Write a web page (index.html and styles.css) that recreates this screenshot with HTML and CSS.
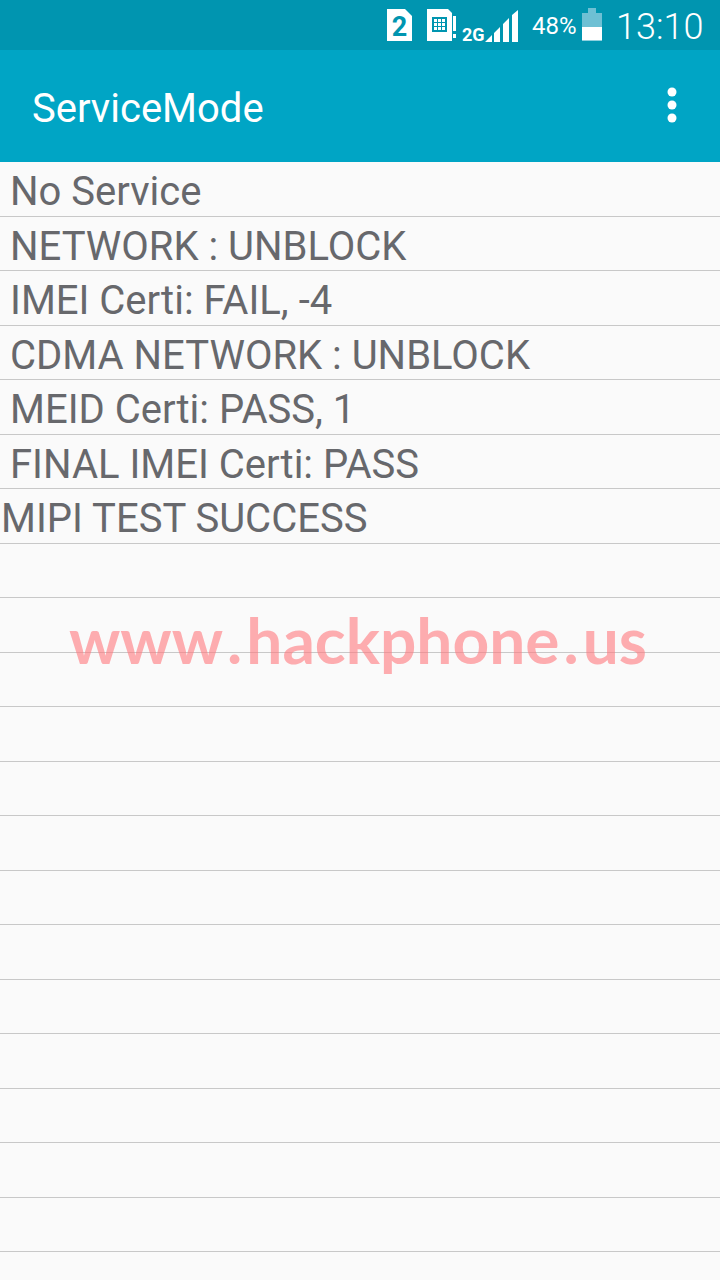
FILE: index.html
```html
<!DOCTYPE html>
<html lang="en">
<head>
<meta charset="utf-8">
<title>ServiceMode</title>
<link rel="stylesheet" href="styles.css">
</head>
<body>
<div class="screen">
  <header class="status">
    <svg class="ic-sim2" viewBox="0 0 25 32"><path d="M0 0H18L25 7V32H0Z" fill="#fff"/><text x="12.5" y="26.500" text-anchor="middle" class="sim-num">2</text></svg>
    <svg class="ic-sim" viewBox="0 0 29 32"><path d="M0 0H21L25 4V32H0Z" fill="#fff"/><path d="M5 8H20V23H5Z" fill="#0095b0"/><path d="M7 10h3v3H7ZM11 10h3v3h-3ZM15 10h3v3h-3ZM7 14h3v3H7ZM11 14h3v3h-3ZM15 14h3v3h-3ZM7 18h3v3H7ZM11 18h3v3h-3ZM15 18h3v3h-3Z" fill="#fff"/><path d="M26 7h3v15h-3ZM26 25h3v4h-3Z" fill="#fff"/></svg>
    <span class="net">2G</span>
    <svg class="ic-signal" viewBox="0 0 33 32"><path d="M0 32L7 25V32ZM9 32V23L15 17V32ZM18 32V14L24 8V32ZM27 32V5L33 0V32Z" fill="#fff"/></svg>
    <span class="pct">48%</span>
    <svg class="ic-bat" viewBox="0 0 20 33"><path d="M6 0H14V5H20V19H0V5H6Z" fill="#6ec0d4"/><path d="M0 19H20V32H0Z" fill="#fff"/><path d="M0 32H20V33H0Z" fill="#8fd0de"/></svg>
    <span class="clock">13:10</span>
  </header>
  <div class="appbar">
    <h1 class="title">ServiceMode</h1>
    <svg class="ic-menu" viewBox="0 0 10 36"><circle cx="5" cy="5" r="4.500" fill="#fff"/><circle cx="5" cy="18" r="4.500" fill="#fff"/><circle cx="5" cy="31" r="4.500" fill="#fff"/></svg>
  </div>
  <ul class="list">
    <li class="row">No Service</li>
    <li class="row">NETWORK : UNBLOCK</li>
    <li class="row">IMEI Certi: FAIL, -4</li>
    <li class="row">CDMA NETWORK : UNBLOCK</li>
    <li class="row">MEID Certi: PASS, 1</li>
    <li class="row">FINAL IMEI Certi: PASS</li>
    <li class="row row-flush">MIPI TEST SUCCESS</li>
    <li class="row"></li><li class="row"></li><li class="row"></li><li class="row"></li>
    <li class="row"></li><li class="row"></li><li class="row"></li><li class="row"></li>
    <li class="row"></li><li class="row"></li><li class="row"></li><li class="row"></li>
    <li class="row"></li>
  </ul>
  <div class="watermark">www<span class="dot">.</span>hackphone<span class="dot">.</span>us</div>
</div>
</body>
</html>
```
FILE: styles.css
```css
* { box-sizing: border-box; }
html, body { margin: 0; padding: 0; }
body { background: #fafafa; font-family: Roboto, "Liberation Sans", sans-serif; }
.screen { position: relative; width: 720px; height: 1280px; overflow: hidden; background: #fafafa; }

.status { height: 50px; background: #0095b0; display: flex; align-items: flex-start; color: #fff; padding-left: 387px; }
.ic-sim2 { width: 25px; height: 32px; margin-top: 9px; }
.sim-num { font: 700 27px Roboto, sans-serif; fill: #0095b0; }
.ic-sim { width: 29px; height: 32px; margin-top: 9px; margin-left: 15px; }
.net { font-size: 18px; font-weight: 700; margin-top: 24px; margin-left: 6px; line-height: 21px; width: 23px; }
.ic-signal { width: 33px; height: 32px; margin-top: 10px; }
.pct { font-size: 24px; line-height: 28px; margin-top: 12px; margin-left: 14px; width: 44px; }
.ic-bat { width: 20px; height: 33px; margin-top: 8px; margin-left: 6px; }
.clock { font-size: 36px; font-weight: 300; line-height: 42px; margin-top: 6px; margin-left: 14px; }

.appbar { height: 112px; background: #00a5c5; display: flex; align-items: center; justify-content: space-between; padding: 0 43px 0 32px; }
.title { margin: 0; font-size: 40px; font-weight: 400; color: #fff; line-height: 46px; margin-top: 6px; }
.ic-menu { width: 10px; height: 36px; margin-top: -2px; }

.list { list-style: none; margin: 0; padding: 0; }
.row { height: 54.5px; border-bottom: 1px solid #c8c8c8; padding-left: 10px; font-size: 40px; line-height: 59px; color: #67686c; white-space: nowrap; }
.row-flush { padding-left: 1px; }

.watermark { position: absolute; left: 69px; top: 600px; font-family: Lato, sans-serif; font-size: 64px; font-weight: 700; line-height: 80px; color: rgba(255, 120, 125, 0.6); white-space: nowrap; }
.dot { margin: 0 4px; }
```
